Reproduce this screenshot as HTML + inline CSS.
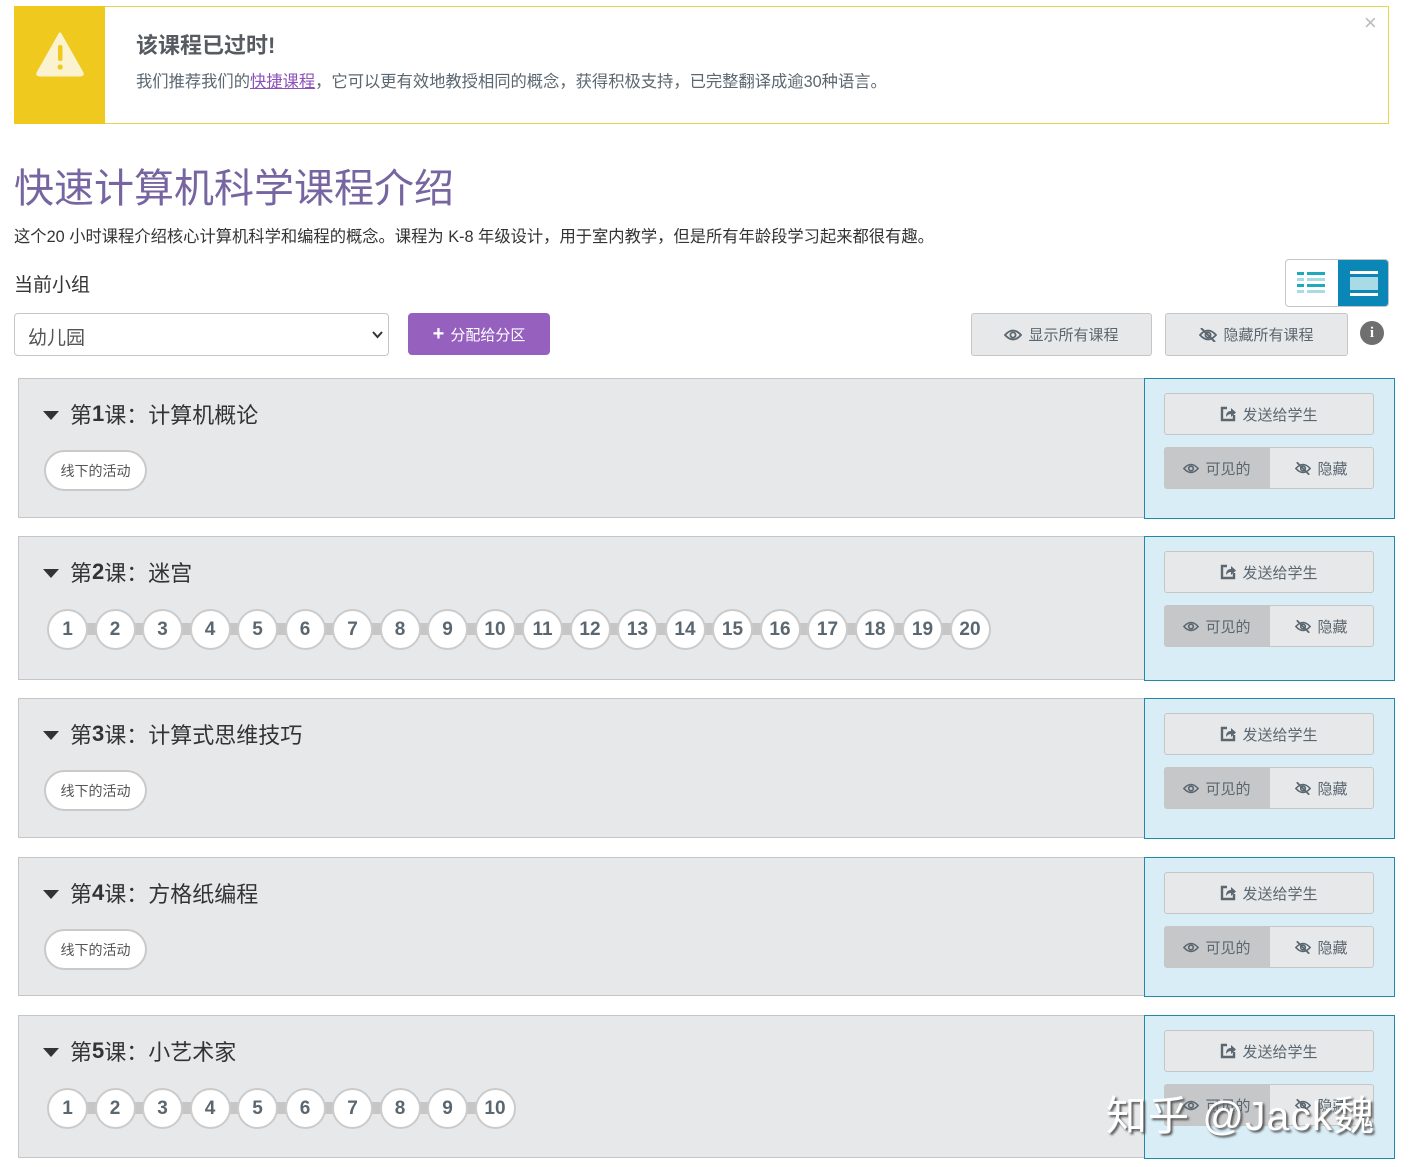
<!DOCTYPE html>
<html><head><meta charset="utf-8">
<style>
*{box-sizing:border-box;margin:0;padding:0}
body{width:1415px;height:1167px;background:#fff;position:relative;overflow:hidden;font-family:"Liberation Sans","Noto Sans CJK SC",sans-serif;color:#4d5156}
.a{position:absolute}
.btn{position:absolute;background:#e7e8ea;border:1px solid #c6c6c6;border-radius:3px;color:#5b6770;font-size:15px;display:flex;align-items:center;justify-content:center;gap:6px}
.row{position:absolute;left:18px;width:1127px;background:#e7e8ea;border:1px solid #c6c6c6}
.side{position:absolute;left:1144px;width:251px;background:#d9edf7;border:1.5px solid #1d8aa8}
.title{position:absolute;left:24px;top:19px;font-size:22px;color:#333;display:flex;align-items:center}
.title:before{content:"";border-left:8px solid transparent;border-right:8px solid transparent;border-top:9px solid #333;margin-right:11px;margin-top:2px}
.pill{position:absolute;left:25px;top:71px;width:103px;height:41px;border:2px solid #c9c9c9;background:#fff;border-radius:21px;font-size:14px;color:#555;display:flex;align-items:center;justify-content:center}
.bub{position:absolute;top:72px;left:28px;height:40px}
.bub .bar{position:absolute;left:20px;top:14px;height:12px;background:#c6c6c6}
.bub span{position:absolute;top:0;width:41px;height:41px;border:2px solid #cbcbcb;border-radius:50%;background:#fff;font:bold 19px "Liberation Sans",sans-serif;color:#5b6770;display:flex;align-items:center;justify-content:center}
.send{left:19px;top:14px;width:210px;height:42px}
.vis{left:19px;top:68px;width:106px;height:42px;background:#c5c7c9;border-radius:3px 0 0 3px}
.hid{left:124px;top:68px;width:105px;height:42px;border-radius:0 3px 3px 0}
</style></head><body>
<svg width="0" height="0" style="position:absolute">
<defs>
<symbol id="eye" viewBox="0 0 18 14"><path d="M1 7 Q9 -2 17 7 Q9 16 1 7 Z" fill="none" stroke="#5b6770" stroke-width="1.8"/><circle cx="9" cy="7" r="2.6" fill="none" stroke="#5b6770" stroke-width="1.8"/></symbol>
<symbol id="neye" viewBox="0 0 18 14"><path d="M1 7 Q9 -2 17 7 Q9 16 1 7 Z" fill="none" stroke="#5b6770" stroke-width="1.8"/><circle cx="9" cy="7" r="2.6" fill="none" stroke="#5b6770" stroke-width="1.8"/><path d="M2 0 L16 14" stroke="#5b6770" stroke-width="2"/></symbol>
<symbol id="share" viewBox="0 0 16 16"><path d="M7 2 H2 V14 H14 V9" fill="none" stroke="#5b6770" stroke-width="2.4"/><path d="M6 11 Q6 5 11 5 V2 L16 6.5 L11 11 V8 Q8 8 6 11Z" fill="#5b6770"/></symbol>
</defs></svg>

<div class="a" style="left:14px;top:6px;width:1375px;height:118px;border:1.5px solid #e7d64a"></div>
<div class="a" style="left:14px;top:6px;width:91px;height:118px;background:#efc91d"></div>
<svg class="a" style="left:35px;top:31px" width="50" height="46" viewBox="0 0 50 46"><path d="M25 3 L47 42 Q48 44 45 44 L5 44 Q2 44 3 42 Z" fill="#fbf3d0" stroke="#fbf3d0" stroke-width="3" stroke-linejoin="round"/><rect x="23" y="14" width="4.5" height="16" rx="2" fill="#efc91d"/><circle cx="25.2" cy="36" r="2.6" fill="#efc91d"/></svg>
<div class="a" style="left:136px;top:28px;font-size:22px;font-weight:bold;color:#555b61">该课程已过时!</div>
<div class="a" style="left:136px;top:68px;font-size:16.3px;color:#5b6770;white-space:nowrap">我们推荐我们的<span style="color:#8c52ba;text-decoration:underline">快捷课程</span>，它可以更有效地教授相同的概念，获得积极支持，已完整翻译成逾30种语言。</div>
<div class="a" style="left:1364px;top:10px;font-size:22px;color:#bbb">×</div>

<div class="a" style="left:14px;top:156px;font-size:40px;color:#7665a0;white-space:nowrap">快速计算机科学课程介绍</div>
<div class="a" style="left:14px;top:223px;font-size:16.3px;color:#333;white-space:nowrap">这个20 小时课程介绍核心计算机科学和编程的概念。课程为 K-8 年级设计，用于室内教学，但是所有年龄段学习起来都很有趣。</div>
<div class="a" style="left:14px;top:270px;font-size:19px;color:#333">当前小组</div>

<div class="a" style="left:14px;top:313px;width:375px;height:43px;border:1px solid #c6c6c6;border-radius:4px;font-size:19px;color:#555;padding:9px 13px">幼儿园<svg style="position:absolute;right:5px;top:17px" width="11" height="8"><path d="M1 1 L5.5 6 L10 1" fill="none" stroke="#333" stroke-width="2"/></svg></div>
<div class="btn" style="left:408px;top:313px;width:142px;height:42px;background:#9660bf;border-color:#9660bf;color:#fff;border-radius:4px"><b style="font-size:20px">+</b>分配给分区</div>

<div class="a" style="left:1285px;top:259px;width:104px;height:48px;border:1px solid #c6c6c6;border-radius:4px;background:#fff;overflow:hidden">
<svg class="a" style="left:11px;top:9px" width="30" height="30"><g fill="#1eaabb"><rect x="0" y="3" width="7" height="3"/><rect x="10" y="3" width="18" height="3"/><rect x="0" y="15" width="7" height="3"/><rect x="10" y="15" width="18" height="3"/></g><g fill="#a8dbe5"><rect x="0" y="9" width="7" height="3"/><rect x="10" y="9" width="18" height="3"/><rect x="0" y="21" width="7" height="3"/><rect x="10" y="21" width="18" height="3"/></g></svg>
<div class="a" style="left:52px;top:0;width:52px;height:48px;background:#0a86b7"><div class="a" style="left:12px;top:11px;width:28px;height:3px;background:#fff"></div><div class="a" style="left:12px;top:17px;width:28px;height:13px;background:#a8dbe5"></div><div class="a" style="left:12px;top:33px;width:28px;height:3px;background:#fff"></div></div>
</div>

<div class="btn" style="left:971px;top:313px;width:181px;height:43px"><svg width="18" height="14"><use href="#eye"/></svg> 显示所有课程</div>
<div class="btn" style="left:1165px;top:313px;width:183px;height:43px"><svg width="18" height="14"><use href="#neye"/></svg> 隐藏所有课程</div>
<div class="a" style="left:1360px;top:321px;width:24px;height:24px;border-radius:50%;background:#6f6f6f;color:#fff;font:bold 15px 'Liberation Serif',serif;text-align:center;line-height:24px">i</div>

<div class="row" style="top:378px;height:140px"><div class="title">第<b>1</b>课：计算机概论</div><div class="pill">线下的活动</div></div>
<div class="side" style="top:378px;height:141px"><div class="btn send"><svg width="16" height="16"><use href="#share"/></svg> 发送给学生</div><div class="btn vis"><svg width="16" height="13"><use href="#eye"/></svg> 可见的</div><div class="btn hid"><svg width="16" height="13"><use href="#neye"/></svg> 隐藏</div></div>

<div class="row" style="top:536px;height:144px"><div class="title">第<b>2</b>课：迷宫</div>
<div class="bub"><div class="bar" style="width:903px"></div>
<span style="left:0">1</span><span style="left:47.5px">2</span><span style="left:95px">3</span><span style="left:142.5px">4</span><span style="left:190px">5</span><span style="left:237.5px">6</span><span style="left:285px">7</span><span style="left:332.5px">8</span><span style="left:380px">9</span><span style="left:427.5px">10</span><span style="left:475px">11</span><span style="left:522.5px">12</span><span style="left:570px">13</span><span style="left:617.5px">14</span><span style="left:665px">15</span><span style="left:712.5px">16</span><span style="left:760px">17</span><span style="left:807.5px">18</span><span style="left:855px">19</span><span style="left:902.5px">20</span></div></div>
<div class="side" style="top:536px;height:145px"><div class="btn send"><svg width="16" height="16"><use href="#share"/></svg> 发送给学生</div><div class="btn vis"><svg width="16" height="13"><use href="#eye"/></svg> 可见的</div><div class="btn hid"><svg width="16" height="13"><use href="#neye"/></svg> 隐藏</div></div>

<div class="row" style="top:698px;height:140px"><div class="title">第<b>3</b>课：计算式思维技巧</div><div class="pill">线下的活动</div></div>
<div class="side" style="top:698px;height:141px"><div class="btn send"><svg width="16" height="16"><use href="#share"/></svg> 发送给学生</div><div class="btn vis"><svg width="16" height="13"><use href="#eye"/></svg> 可见的</div><div class="btn hid"><svg width="16" height="13"><use href="#neye"/></svg> 隐藏</div></div>

<div class="row" style="top:857px;height:139px"><div class="title">第<b>4</b>课：方格纸编程</div><div class="pill">线下的活动</div></div>
<div class="side" style="top:857px;height:140px"><div class="btn send"><svg width="16" height="16"><use href="#share"/></svg> 发送给学生</div><div class="btn vis"><svg width="16" height="13"><use href="#eye"/></svg> 可见的</div><div class="btn hid"><svg width="16" height="13"><use href="#neye"/></svg> 隐藏</div></div>

<div class="row" style="top:1015px;height:143px"><div class="title">第<b>5</b>课：小艺术家</div>
<div class="bub"><div class="bar" style="width:428px"></div>
<span style="left:0">1</span><span style="left:47.5px">2</span><span style="left:95px">3</span><span style="left:142.5px">4</span><span style="left:190px">5</span><span style="left:237.5px">6</span><span style="left:285px">7</span><span style="left:332.5px">8</span><span style="left:380px">9</span><span style="left:427.5px">10</span></div></div>
<div class="side" style="top:1015px;height:144px"><div class="btn send"><svg width="16" height="16"><use href="#share"/></svg> 发送给学生</div><div class="btn vis"><svg width="16" height="13"><use href="#eye"/></svg> 可见的</div><div class="btn hid"><svg width="16" height="13"><use href="#neye"/></svg> 隐藏</div></div>

<div class="a" style="left:1106px;top:1082px;font-size:41px;color:#fff;text-shadow:2px 2px 2px #555;white-space:nowrap;letter-spacing:1px">知乎 @Jack魏</div>
</body></html>
